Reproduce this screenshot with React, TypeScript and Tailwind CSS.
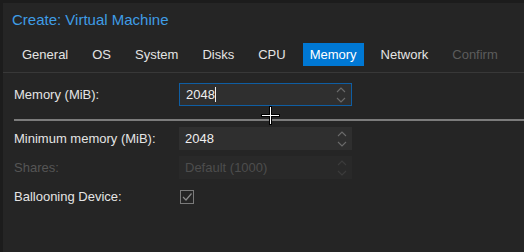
import React from "react";

function Spinner({ dim = false }: { dim?: boolean }) {
  const c = dim ? "#3c3c3c" : "#6b6b6b";
  return (
    <svg width="10" height="18" viewBox="0 0 10 18" className="shrink-0">
      <path d="M1 6 L5 2 L9 6" fill="none" stroke={c} strokeWidth="1.1" />
      <path d="M1 12 L5 16 L9 12" fill="none" stroke={c} strokeWidth="1.1" />
    </svg>
  );
}

function Field({
  label,
  value,
  focused = false,
  disabled = false,
}: {
  label: string;
  value: string;
  focused?: boolean;
  disabled?: boolean;
}) {
  return (
    <div className="flex items-center h-[23px]">
      <div className={`w-[165px] text-[13px] ${disabled ? "text-[#555555]" : "text-[#e4e4e4]"}`}>{label}</div>
      <div
        className={`w-[173px] h-[23px] flex items-center justify-between pl-[6px] pr-[5px] ${
          focused
            ? "border border-[#0f5ea3] bg-[#2f2f2f]"
            : disabled
            ? "bg-[#292929]"
            : "bg-[#2f2f2f]"
        }`}
      >
        <span className={`text-[13px] ${disabled ? "text-[#4d4d4d]" : "text-[#eeeeee]"}`}>
          {value}
          {focused && <span className="inline-block w-px h-[15px] bg-[#eeeeee] align-[-3px]" />}
        </span>
        <Spinner dim={disabled} />
      </div>
    </div>
  );
}

export default function App() {
  const tabs = ["General", "OS", "System", "Disks", "CPU", "Memory", "Network", "Confirm"];
  return (
    <div
      className="relative w-[524px] h-[252px] bg-[#1c1c1c] overflow-hidden"
      style={{ fontFamily: '"Liberation Sans", Arial, sans-serif' }}
    >
      <div className="absolute left-[3px] top-[3px] right-0 bottom-0 bg-[#252525] flex flex-col">
        <div className="h-[34px] pl-[9px] flex items-center text-[15px] text-[#3f9de6]">
          Create: Virtual Machine
        </div>
        <div className="h-[36px] flex items-start pt-[6px] pl-[12px] gap-[10px] border-b border-[#383838]">
          {tabs.map((t) => (
            <div
              key={t}
              className={`h-[23px] px-[7px] flex items-center text-[13px] ${
                t === "Memory"
                  ? "bg-[#0078d4] text-white"
                  : t === "Confirm"
                  ? "text-[#5c5c5c]"
                  : "text-[#e4e4e4]"
              }`}
            >
              {t}
            </div>
          ))}
        </div>
        <div className="flex-1 flex flex-col pt-[10px] pl-[11px]">
          <Field label="Memory (MiB):" value="2048" focused />
          <div className="h-[2px] bg-[#7c7c7c] mt-[13px] mb-[6px]" />
          <div className="flex flex-col gap-[6px]">
            <Field label="Minimum memory (MiB):" value="2048" />
            <Field label="Shares:" value="Default (1000)" disabled />
            <div className="flex items-center h-[23px]">
              <div className="w-[166px] text-[13px] text-[#e4e4e4]">Ballooning Device:</div>
              <svg width="14" height="14" viewBox="0 0 14 14">
                <rect x="0.5" y="0.5" width="13" height="13" fill="none" stroke="#7a7a7a" />
                <path d="M3 7 L6 10 L11.5 3.5" fill="none" stroke="#8a8a8a" strokeWidth="1.2" />
              </svg>
            </div>
          </div>
        </div>
      </div>
      <svg className="absolute left-[261px] top-[106px]" width="19" height="19" viewBox="0 0 19 19">
        <path d="M8 0 H11 V8 H19 V11 H11 V19 H8 V11 H0 V8 H8 Z" fill="#000" />
        <path d="M9 1 H10 V9 H18 V10 H10 V18 H9 V10 H1 V9 H9 Z" fill="#fff" />
      </svg>
    </div>
  );
}
